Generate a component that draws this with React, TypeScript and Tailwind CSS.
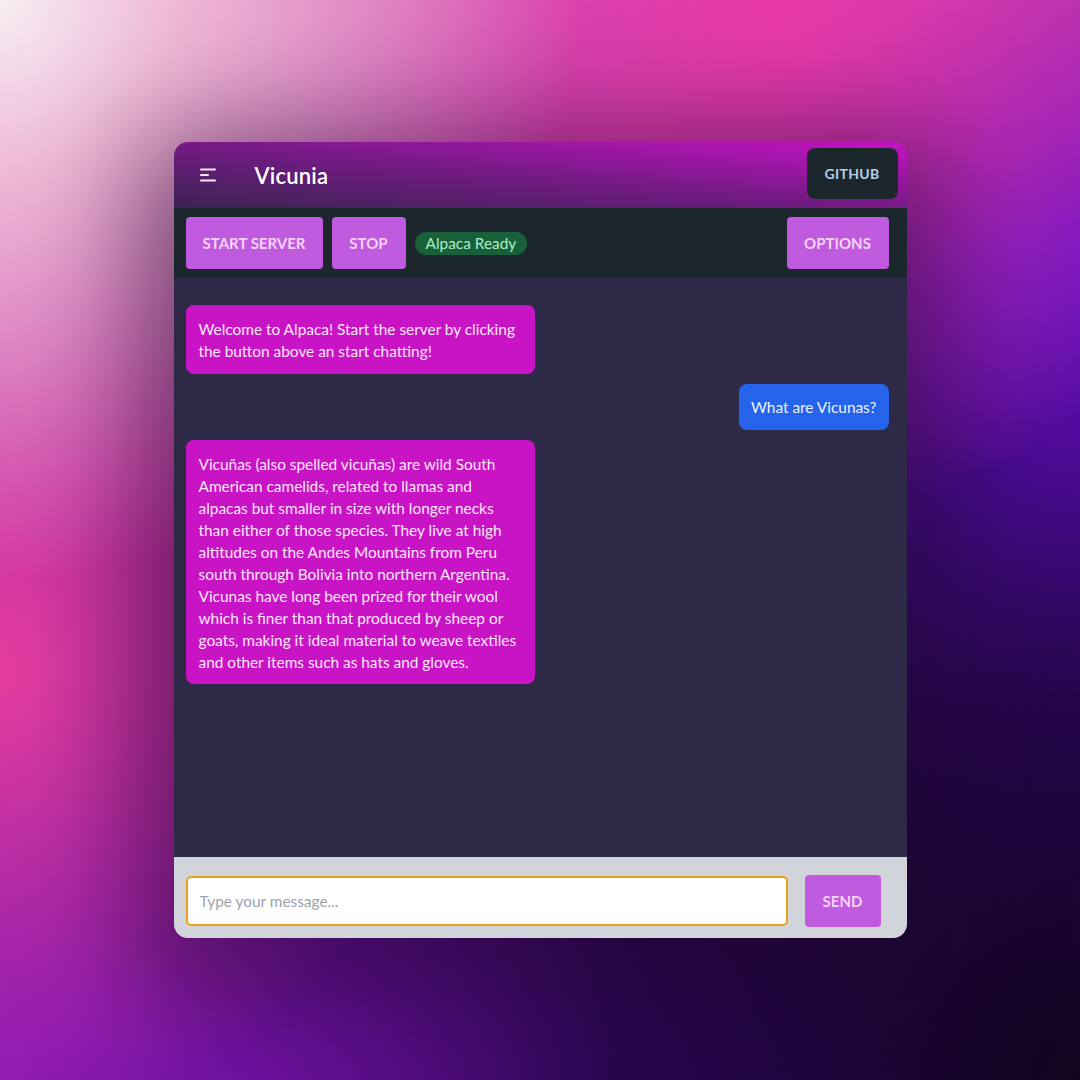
import React from "react";

function Hamburger() {
  return (
    <svg width="18" height="16" viewBox="0 0 18 16" fill="none">
      <rect x="1" y="1.5" width="16" height="2" rx="1" fill="#f3e6f5" />
      <rect x="1" y="7" width="9" height="2" rx="1" fill="#f3e6f5" />
      <rect x="1" y="12.5" width="16" height="2" rx="1" fill="#f3e6f5" />
    </svg>
  );
}

export default function App() {
  const font = { fontFamily: '"Segoe UI", Lato, "Noto Sans", sans-serif' };
  return (
    <div
      className="w-[1080px] h-[1080px] flex items-start justify-center pt-[142px] bg-[#4a0c86] bg-[radial-gradient(circle_at_0%_0%,#f7eef3_0%,#eeb6d6_12%,rgba(230,120,190,0)_38%),radial-gradient(circle_at_72%_2%,#e83aa8_0%,rgba(225,50,165,0)_38%),radial-gradient(circle_at_0%_62%,#e43e9e_0%,rgba(220,60,160,0)_35%),radial-gradient(circle_at_0%_100%,#8a18b6_0%,rgba(130,20,180,0)_40%),radial-gradient(circle_at_100%_100%,#12041e_0%,#25064a_25%,rgba(40,6,80,0)_55%),radial-gradient(circle_at_100%_42%,#7010dc_0%,#6410c8_18%,rgba(100,10,200,0)_44%),linear-gradient(160deg,#d86ab8_0%,#b22aa8_35%,#5a0ca0_70%,#2a0650_100%)]"
      style={font}
    >
      <div className="w-[733px] rounded-[14px] overflow-hidden flex flex-col shadow-[0_30px_110px_40px_rgba(30,5,40,0.5)]">
        {/* Header */}
        <div className="h-[66px] flex items-center justify-between pl-[25px] pr-[9px] bg-[linear-gradient(to_top_right,#3c2452_0%,#6e1b80_45%,#c512c3_100%)]">
          <div className="flex items-center">
            <Hamburger />
            <span className="ml-[38px] text-[22px] font-semibold text-white tracking-[0.2px]">Vicunia</span>
          </div>
          <button className="-mt-[3px] w-[91px] h-[51px] rounded-[8px] bg-[#1b262d] text-[#b4d0e4] text-[14px] font-bold tracking-[0.3px]">
            GITHUB
          </button>
        </div>
        {/* Toolbar */}
        <div className="h-[70px] bg-[#1b262d] flex items-center pl-3 pr-[18px]">
          <button className="h-[52px] w-[137px] rounded-[4px] bg-[#c05ade] text-[#f3d4f7] text-[15px] font-bold">
            START SERVER
          </button>
          <button className="ml-[9px] h-[52px] w-[74px] rounded-[4px] bg-[#c05ade] text-[#f3d4f7] text-[15px] font-bold">
            STOP
          </button>
          <span className="ml-[9px] h-[23px] px-[11px] rounded-full bg-[#17603a] text-[#a6f0c4] text-[15.4px] leading-[23px]">
            Alpaca Ready
          </span>
          <div className="flex-1" />
          <button className="h-[52px] w-[102px] rounded-[4px] bg-[#c05ade] text-[#f3d4f7] text-[15px] font-bold">
            OPTIONS
          </button>
        </div>
        {/* Chat */}
        <div className="h-[579px] bg-[#2d2946] pl-3 pr-[18px] pt-[27px] flex flex-col gap-[10px] text-[15.4px] leading-[22px] text-[#fbe6fb]">
          <div className="self-start w-[349px] rounded-[8px] bg-[#c914c5] px-[13px] pt-[13px] pb-[12px]">
            Welcome to Alpaca! Start the server by clicking the button above an start chatting!
          </div>
          <div className="self-end rounded-[8px] bg-[#2563eb] px-[12px] pt-[12px] pb-[12px] text-[#eef2ff]">
            What are Vicunas?
          </div>
          <div className="self-start w-[349px] rounded-[8px] bg-[#c914c5] px-[13px] pt-[13px] pb-[11px]">
            Vicuñas (also spelled vicuñas) are wild South American camelids, related to llamas and alpacas but smaller in size with longer necks than either of those species. They live at high altitudes on the Andes Mountains from Peru south through Bolivia into northern Argentina. Vicunas have long been prized for their wool which is finer than that produced by sheep or goats, making it ideal material to weave textiles and other items such as hats and gloves.
          </div>
        </div>
        {/* Footer */}
        <div className="h-[81px] bg-[#d1d5db] flex items-start pt-[18px] pl-3 pr-[26px]">
          <input
            autoFocus
            className="mt-px h-[50px] w-[602px] rounded-[5px] border-2 border-[#eaa21a] bg-white px-[12px] text-[15.4px] text-gray-800 placeholder:text-[#9ca3af] outline-none caret-gray-700"
            placeholder="Type your message..."
          />
          <div className="flex-1" />
          <button className="h-[52px] w-[76px] rounded-[4px] bg-[#c05ade] text-[#f3d4f7] text-[15px] font-bold">
            SEND
          </button>
        </div>
      </div>
    </div>
  );
}
